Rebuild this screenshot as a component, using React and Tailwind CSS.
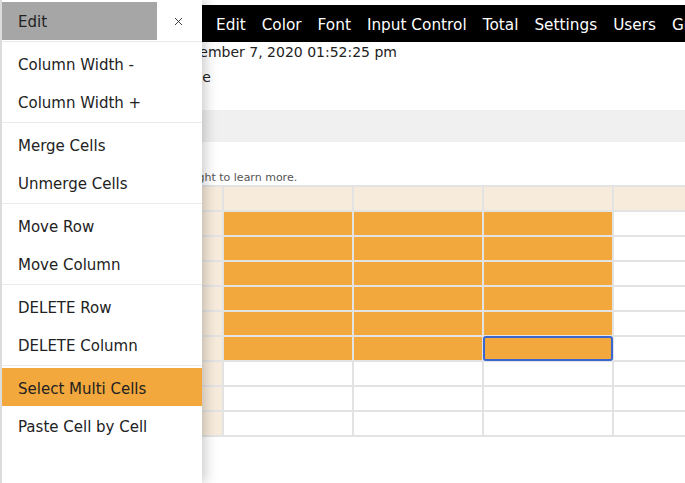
import React from 'react';
import { X } from 'lucide-react';

const navItems = ['Edit', 'Color', 'Font', 'Input Control', 'Total', 'Settings', 'Users', 'Groups'];

const menuGroups = [
  ['Column Width -', 'Column Width +'],
  ['Merge Cells', 'Unmerge Cells'],
  ['Move Row', 'Move Column'],
  ['DELETE Row', 'DELETE Column'],
  ['Select Multi Cells', 'Paste Cell by Cell']
];

const ROWS = 9;
const COLS = 4;

const isFilled = (r, c) => r < 6 && c < 3;

export default function App() {
  return (
    <div
      className="relative w-full h-[483px] overflow-hidden bg-white text-[#222]"
      style={{ fontFamily: '"DejaVu Sans", Verdana, sans-serif' }}
    >
      {/* Navbar */}
      <div className="mt-[5px] h-[37px] pt-[3px] bg-black text-white text-[15.3px] flex items-center pl-[208px] whitespace-nowrap">
        {navItems.map(item => (
          <span key={item} className="px-2">{item}</span>
        ))}
      </div>

      {/* Info lines */}
      <p className="text-[14px] leading-[20px] pl-[27px] whitespace-nowrap">
        Last Modified Date: September 7, 2020 01:52:25 pm
      </p>
      <p className="mt-[5px] text-[14px] leading-[20px] pl-[68px] whitespace-nowrap">
        Sheet: Sample Table
      </p>

      {/* Toolbar band */}
      <div className="mt-[23px] h-[32px] bg-[#f0f0f0]" />

      {/* Hint */}
      <p className="mt-[29px] text-[11px] leading-[13px] text-[#555] pl-[9px] whitespace-nowrap">
        Tip: tap a cell, then swipe left or right to learn more.
      </p>

      {/* Sheet */}
      <div className="mt-px grid grid-cols-[222px_128px_128px_128px_1fr] gap-[2px] py-[2px] bg-[#e3e3e3]">
        <div className="h-[23px] bg-[#f7ebdb]" />
        {Array.from({ length: COLS }).map((_, c) => (
          <div key={`h${c}`} className="h-[23px] bg-[#f7ebdb]" />
        ))}
        {Array.from({ length: ROWS }).map((_, r) => (
          <React.Fragment key={r}>
            <div className="h-[23px] bg-[#f7ebdb]" />
            {Array.from({ length: COLS }).map((_, c) => (
              <div
                key={c}
                className={`relative h-[23px] ${isFilled(r, c) ? 'bg-[#f2a83c]' : 'bg-white'}`}
              >
                {r === 5 && c === 2 && (
                  <div className="absolute -inset-[1px] border-2 border-[#3a66d0] rounded-[3px]" />
                )}
              </div>
            ))}
          </React.Fragment>
        ))}
      </div>

      {/* Side drawer */}
      <div className="absolute left-0 top-0 w-[202px] h-full bg-white border-l-2 border-[#dcdcdc] shadow-[3px_0_12px_rgba(0,0,0,0.22)] text-[15px]">
        <div className="flex pt-[2px] pb-px border-b border-[#ebebeb]">
          <div className="w-[155px] h-[38px] pt-[2px] bg-[#a6a6a6] pl-4 flex items-center">Edit</div>
          <div className="flex-1 flex items-center justify-center pr-[2px]">
            <X className="w-[13px] h-[13px] text-[#222]" strokeWidth={1.6} />
          </div>
        </div>
        {menuGroups.map((group, gi) => (
          <div key={gi} className={`py-[2px] ${gi < menuGroups.length - 1 ? 'border-b border-[#ebebeb]' : ''}`}>
            {group.map(label => (
              <div
                key={label}
                className={`h-[38px] pt-[5px] pl-4 flex items-center ${label === 'Select Multi Cells' ? 'bg-[#f2a83c]' : ''}`}
              >
                {label}
              </div>
            ))}
          </div>
        ))}
      </div>
    </div>
  );
}
